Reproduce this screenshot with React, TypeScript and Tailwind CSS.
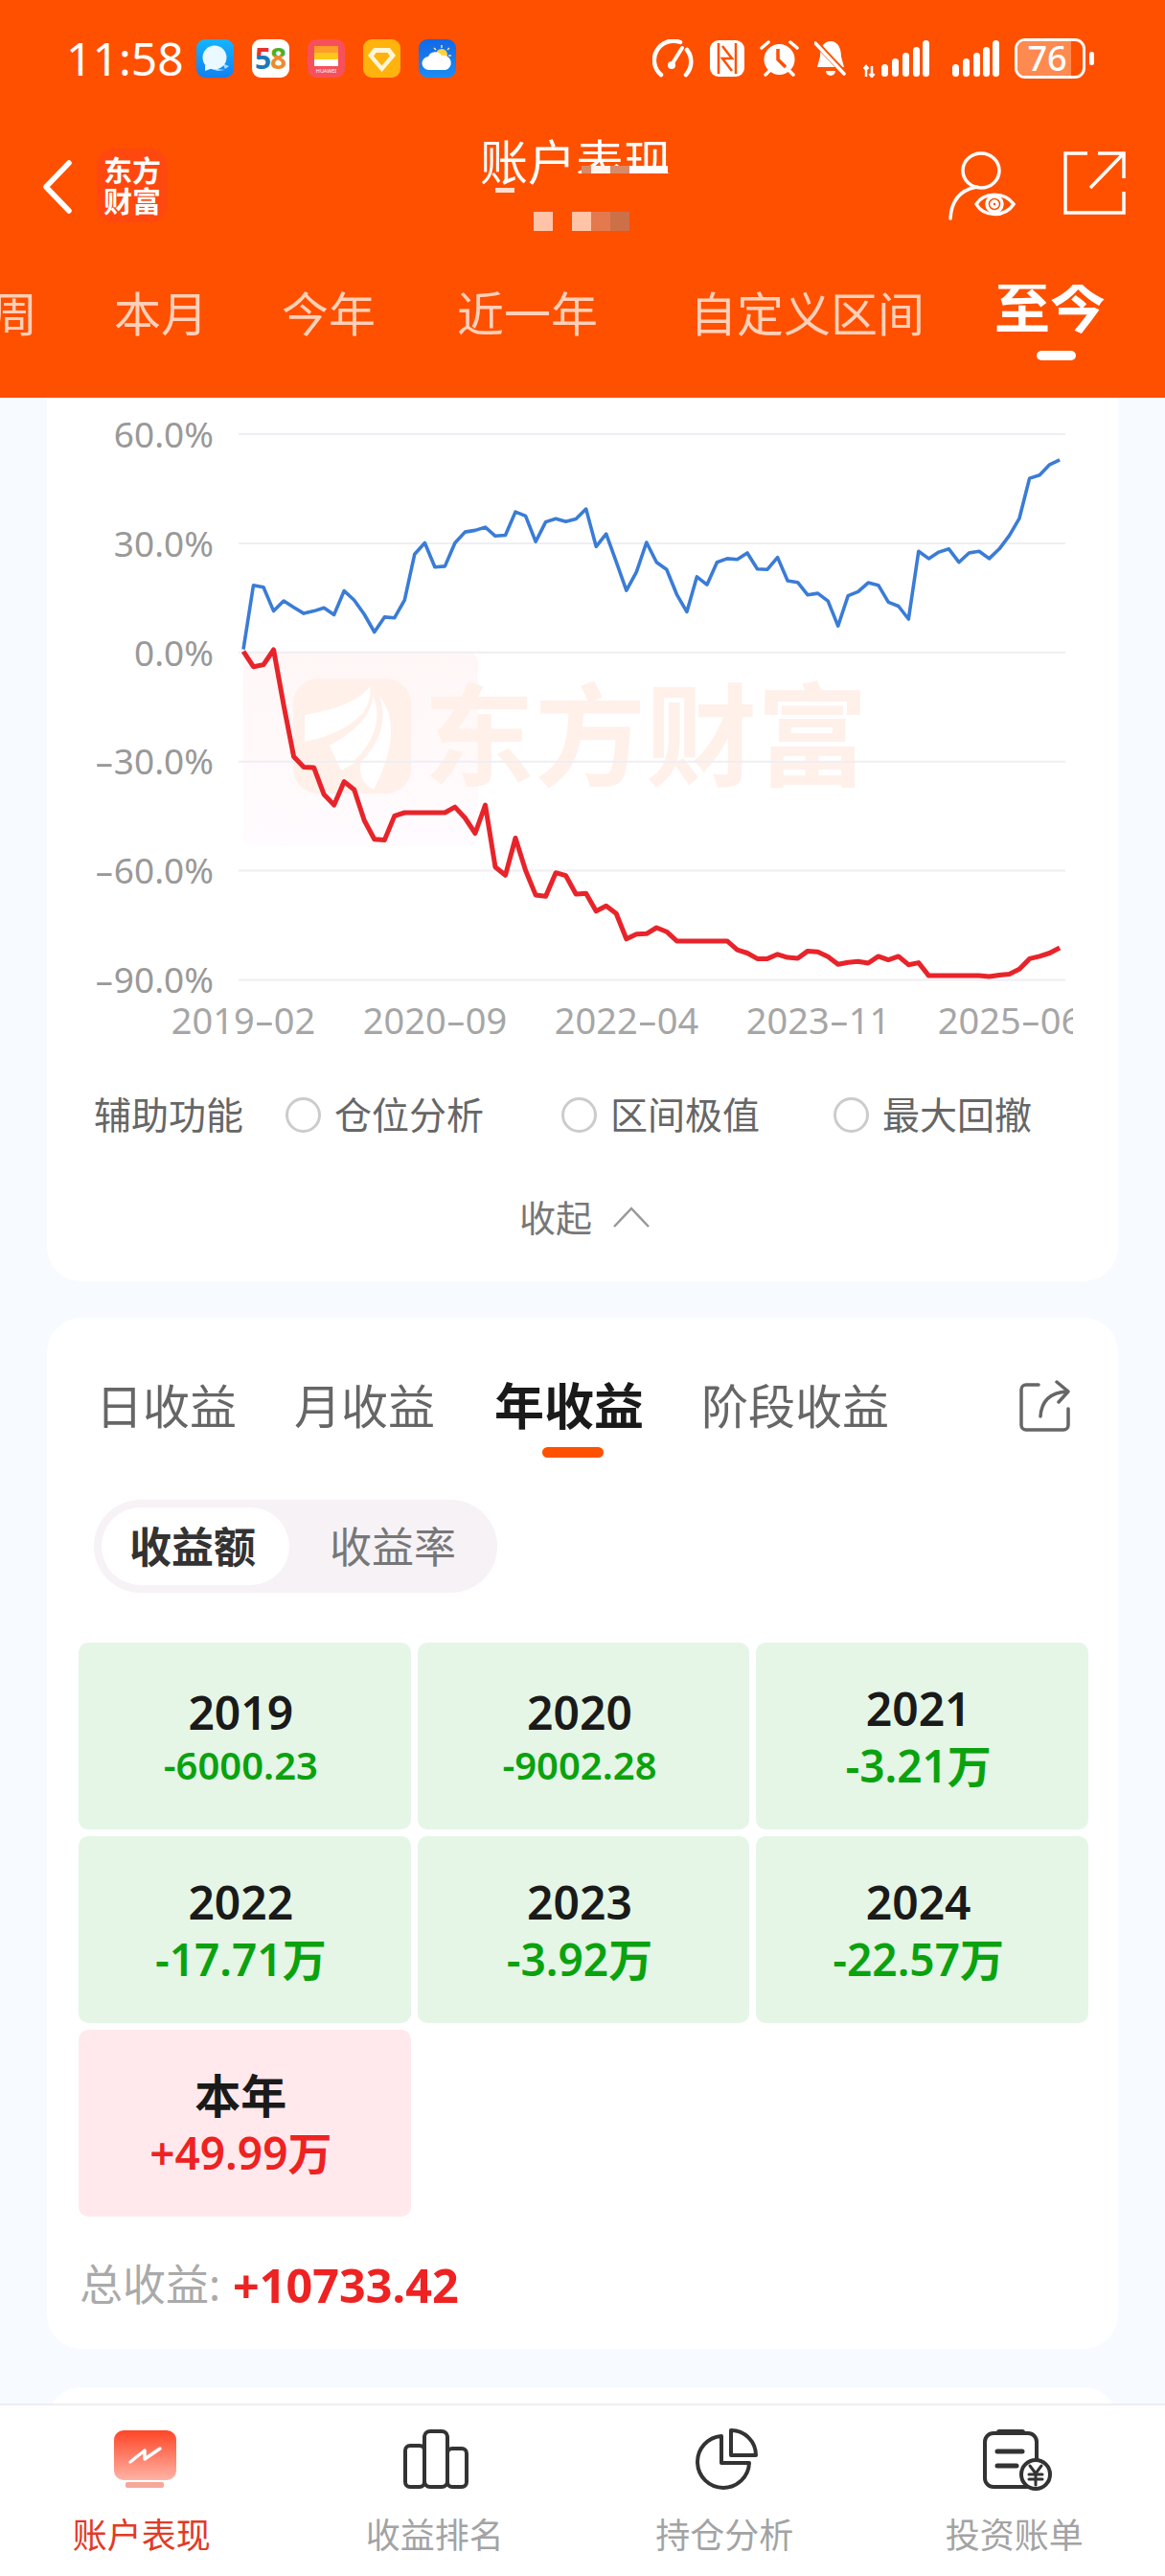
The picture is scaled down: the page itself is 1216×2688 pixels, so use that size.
import React from "react";

const FONT = '"Noto Sans", "Noto Sans CJK SC", sans-serif';
const blueY = [612,453,458,517,492,508,523,517,509,526,467,490,525,569,532,534,490,376,348,408,406,348,321,317,309,331,329,271,281,345,296,288,295,289,264,357,326,395,466,420,347,396,414,476,519,432,452,396,387,389,373,413,414,384,442,446,477,473,492,554,479,469,447,453,495,505,537,369,387,371,363,396,373,369,387,363,330,287,188,180,154,142];
const redY = [617,655,650,613,750,878,904,905,972,998,940,960,1036,1083,1085,1025,1017,1017,1017,1017,1017,1003,1030,1068,998,1152,1172,1080,1160,1221,1224,1166,1173,1219,1217,1261,1248,1267,1330,1318,1317,1302,1312,1335,1335,1335,1335,1335,1335,1357,1365,1379,1379,1368,1376,1378,1360,1362,1374,1393,1388,1386,1390,1373,1382,1373,1394,1389,1421,1421,1421,1421,1421,1421,1423,1420,1417,1405,1379,1373,1365,1352];
const toPts = (ys: number[]) => ys.map((y, i) => `${(5 + i * 10.52).toFixed(1)},${(y / 2.376 - 13).toFixed(1)}`).join(" ");

const Dash = () => <span className="inline-block w-[20px] text-center scale-x-[1.7]">-</span>;

const AppIcons = () => (
  <div className="flex gap-[19px] ml-[13px]">
    <svg width="39" height="40" viewBox="0 0 39 40">
      <defs><linearGradient id="m" x1="0" y1="0" x2="0" y2="1"><stop offset="0" stopColor="#12b5ff" /><stop offset="1" stopColor="#1280f0" /></linearGradient></defs>
      <rect width="39" height="40" rx="9" fill="url(#m)" />
      <path d="M27 25 L34 28 L30 31 Z M14 30 L30 32 L22 33 Z" fill="#9fdcff" />
      <ellipse cx="19" cy="19" rx="12.5" ry="12.5" fill="#eaf8ff" />
      <path d="M9 27 L9 33 L17 30 Z" fill="#eaf8ff" />
    </svg>
    <svg width="39" height="40" viewBox="0 0 39 40">
      <defs>
        <linearGradient id="f" x1="0" y1="0" x2="0" y2="1"><stop offset="0.45" stopColor="#e5342c" /><stop offset="0.45" stopColor="#1c79b8" /></linearGradient>
        <linearGradient id="e" x1="0" y1="0" x2="0" y2="1"><stop offset="0.45" stopColor="#4fae24" /><stop offset="0.45" stopColor="#ee8a2b" /></linearGradient>
      </defs>
      <rect width="39" height="40" rx="9" fill="#fff" />
      <text x="3" y="31" fontSize="30" fontWeight="700" fontFamily="Noto Sans" fill="url(#f)">5</text>
      <text x="19" y="31" fontSize="30" fontWeight="700" fontFamily="Noto Sans" fill="url(#e)">8</text>
    </svg>
    <svg width="39" height="40" viewBox="0 0 39 40">
      <rect width="39" height="40" rx="9" fill="#f7505a" />
      <rect x="7" y="7" width="25" height="7" fill="#ff9d2a" />
      <rect x="7" y="14" width="25" height="7" fill="#ffc61a" />
      <rect x="7" y="21" width="25" height="7" fill="#fff" />
      <text x="19.5" y="35" fontSize="5.5" textAnchor="middle" fill="#fff" fontFamily="Noto Sans">HUAWEI</text>
    </svg>
    <svg width="39" height="40" viewBox="0 0 39 40">
      <rect width="39" height="40" rx="9" fill="#ffb30c" />
      <path d="M11 9 H28 L34 17 L19.5 34 L5 17 Z M13.500 14 L11 17.500 L19.500 27.500 L28 17.500 L25.500 14 Z" fill="#fff6d8" fillRule="evenodd" />
    </svg>
    <svg width="39" height="40" viewBox="0 0 39 40">
      <defs><linearGradient id="w" x1="0" y1="0" x2="0" y2="1"><stop offset="0" stopColor="#1268e6" /><stop offset="1" stopColor="#1b8cf5" /></linearGradient></defs>
      <rect width="39" height="40" rx="9" fill="url(#w)" />
      <circle cx="24" cy="16" r="6" fill="#ffd23f" />
      <path d="M24 6 V9 M32 9 L30 11 M16 9 L18 11 M34 17 H31" stroke="#ffe27a" strokeWidth="1.5" />
      <path d="M11 32 A7 7 0 0 1 10 18 A8 8 0 0 1 24 17 A7.5 7.5 0 0 1 28 32 Z" fill="#fff" />
    </svg>
  </div>
);

const StatusRight = () => (
  <div className="ml-auto mr-[74px] flex items-center text-white">
    <svg width="44" height="40" viewBox="0 0 44 40" fill="none" stroke="#fff" strokeLinecap="round" className="shrink-0">
      <path d="M9 37 A20 20 0 0 1 29 3" strokeWidth="4.500" />
      <path d="M36 11 A20 20 0 0 1 35 37" strokeWidth="4.500" />
      <path d="M21 25 L31 9" strokeWidth="4" />
      <circle cx="20" cy="27" r="4" fill="#fff" stroke="none" />
    </svg>
    <svg width="36" height="38" viewBox="0 0 36 38" className="ml-[16px] shrink-0">
      <rect width="36" height="38" rx="9" fill="#fff" />
      <path d="M9 3 V35 M27 3 V35" stroke="#ff5000" strokeWidth="2.500" />
      <path d="M13 6 L23 19 L13 19 L23 32" fill="none" stroke="#ff5000" strokeWidth="2.500" />
    </svg>
    <svg width="41" height="40" viewBox="0 0 41 40" className="ml-[16px] shrink-0">
      <circle cx="20.5" cy="21" r="16" fill="#fff" />
      <path d="M19 10 V21 L27 29" stroke="#ff5000" strokeWidth="3.500" fill="none" />
      <path d="M2 9 L9 3 M39 9 L32 3 M6 37 L10 33 M35 37 L31 33" stroke="#fff" strokeWidth="3.500" strokeLinecap="round" />
    </svg>
    <svg width="34" height="40" viewBox="0 0 34 40" className="ml-[16px] shrink-0">
      <path d="M17 2 C25 2 28 10 28 18 L31 29 H3 L6 18 C6 10 9 2 17 2 Z" fill="#fff" />
      <path d="M12 33 A5 5 0 0 0 22 33 Z" fill="#fff" />
      <path d="M2 4 L32 36" stroke="#ff5000" strokeWidth="6" />
      <path d="M1 4 L31 36" stroke="#fff" strokeWidth="3.500" strokeLinecap="round" />
    </svg>
    <svg width="69" height="40" viewBox="0 0 69 40" className="ml-[17px] shrink-0" fill="#fff">
      <path d="M3 28 V39 M9 28 V39 M6.500 36 L9 39 L11.500 36 M0.500 31 L3 28 L5.500 31" stroke="#fff" strokeWidth="2.500" fill="none" />
      <rect x="19" y="26" width="7" height="13" rx="3.500" />
      <rect x="30" y="20" width="7" height="19" rx="3.500" />
      <rect x="41" y="14" width="7" height="25" rx="3.500" />
      <rect x="52" y="8" width="7" height="31" rx="3.500" />
      <rect x="62" y="1" width="7" height="38" rx="3.500" />
    </svg>
    <svg width="49" height="40" viewBox="0 0 49 40" className="ml-[24px] shrink-0" fill="#fff">
      <rect x="0" y="26" width="7" height="13" rx="3.500" />
      <rect x="11" y="20" width="7" height="19" rx="3.500" />
      <rect x="22" y="14" width="7" height="25" rx="3.500" />
      <rect x="32" y="8" width="7" height="31" rx="3.500" />
      <rect x="42" y="1" width="7" height="38" rx="3.500" />
    </svg>
    <div className="ml-[16px] relative w-[74px] h-[42px] rounded-[11px] border-[3px] border-white overflow-hidden shrink-0">
      <div className="absolute left-0 top-0 bottom-0 w-[56px] bg-[#ff8a50]" />
      <div className="absolute inset-0 flex items-center justify-center text-[36px] leading-none font-medium pr-[6px]">76</div>
    </div>
    <div className="ml-[4px] w-[5px] h-[14px] rounded-full bg-white shrink-0" />
  </div>
);

const Chart = () => (
  <div className="flex pt-[18px]">
    <div className="w-[174px] h-[609px] flex flex-col justify-between items-end text-[37px] leading-[40px] text-[#999999]">
      <div>60.0%</div>
      <div>30.0%</div>
      <div>0.0%</div>
      <div><Dash />30.0%</div>
      <div><Dash />60.0%</div>
      <div><Dash />90.0%</div>
    </div>
    <div className="relative ml-[26px] w-[863px] h-[609px]">
      <div className="absolute left-[5px] top-[247px] w-[245px] h-[203px] rounded-[12px] bg-linear-to-b from-[#fff7f6] to-[#fffbfe]" />
      <div className="absolute left-[57px] top-[275px] w-[123px] h-[120px] rounded-[26px] bg-[#fff0ea] overflow-hidden">
        <svg width="123" height="120" viewBox="0 0 123 120">
          <path d="M12 38 C50 32 72 20 80 8 C84 34 60 56 12 66 Z" fill="#fff" />
          <path d="M38 70 C62 56 84 40 84 12 C104 30 112 62 84 116 C70 108 68 96 72 84 L50 96 Z" fill="#fff" />
          <path d="M84 12 C98 40 88 66 66 88" fill="none" stroke="#fff0ea" strokeWidth="6" />
        </svg>
      </div>
      <div className="absolute left-[193px] top-[268px] text-[116px] leading-[130px] font-bold text-[#fff0ea] whitespace-nowrap">东方财富</div>
      <svg width="863" height="609" viewBox="0 0 863 609" className="absolute inset-0">
        {[20, 133.9, 247.8, 361.7, 475.6, 589.5].map((y) => (
          <line key={y} x1="0" x2="863" y1={y} y2={y} stroke="#eeeef3" strokeWidth="2" />
        ))}
        <polyline points={toPts(blueY)} fill="none" stroke="#3a7cd6" strokeWidth="3.600" strokeLinejoin="round" />
        <polyline points={toPts(redY)} fill="none" stroke="#e8242a" strokeWidth="5" strokeLinejoin="round" />
      </svg>
    </div>
  </div>
);

const Radio = ({ label, cls }: { label: string; cls: string }) => (
  <>
    <div className={`w-[37px] h-[37px] rounded-full border-[3px] border-[#cccccc] shrink-0 ${cls}`} />
    <span className="ml-[14px] whitespace-nowrap">{label}</span>
  </>
);

const years = [
  ["2019", "-6000.23", "text-[40px] leading-[50px]"],
  ["2020", "-9002.28", "text-[40px] leading-[50px]"],
  ["2021", "-3.21万", "text-[46px] leading-[58px]"],
  ["2022", "-17.71万", "text-[46px] leading-[58px]"],
  ["2023", "-3.92万", "text-[46px] leading-[58px]"],
  ["2024", "-22.57万", "text-[46px] leading-[58px]"],
];

const Cell = ({ y, v, size, pink }: { y: string; v: string; size: string; pink?: boolean }) => (
  <div className={`h-[195px] rounded-[10px] flex flex-col items-center justify-center pr-[8px] ${pink ? "bg-[#ffe9ec]" : "bg-[#e5f6e6]"}`}>
    <div className="text-[48px] leading-[60px] font-semibold text-[#1a1a1a]">{y}</div>
    <div className={`${size} font-semibold ${pink ? "text-[#ee2222]" : "text-[#0aa20f]"}`}>{v}</div>
  </div>
);

const bottomTabs = [
  {
    label: "账户表现",
    color: "text-[#e23a26] mr-[7px]",
    iconCls: "ml-[1px]",
    icon: (
      <svg width="66" height="66" viewBox="0 0 66 66">
        <defs><linearGradient id="b" x1="0" y1="0" x2="0" y2="1"><stop offset="0" stopColor="#ff4526" /><stop offset="1" stopColor="#ffb3a6" /></linearGradient></defs>
        <rect x="0" y="3" width="65" height="52" rx="10" fill="url(#b)" />
        <rect x="12" y="57" width="40" height="6" rx="2" fill="#f7a79a" />
        <path d="M17 36 L32 24 L32 33 L48 22" fill="none" stroke="#fff" strokeWidth="3.500" strokeLinecap="round" strokeLinejoin="round" />
      </svg>
    ),
  },
  {
    label: "收益排名",
    color: "text-[#a3a3a3]",
    iconCls: "ml-[2px]",
    icon: (
      <svg width="68" height="66" viewBox="0 0 68 66" fill="none" stroke="#333333" strokeWidth="4">
        <rect x="2" y="19" width="20" height="43" rx="5" />
        <rect x="22" y="4" width="24" height="58" rx="6" />
        <rect x="46" y="22" width="20" height="40" rx="5" />
      </svg>
    ),
  },
  {
    label: "持仓分析",
    color: "text-[#a3a3a3]",
    iconCls: "ml-[6px]",
    icon: (
      <svg width="66" height="66" viewBox="0 0 66 66" fill="none" stroke="#333333" strokeWidth="4" strokeLinejoin="round">
        <path d="M27 9 A27 27 0 1 0 56 37 H27 Z" />
        <path d="M37 3 A26 26 0 0 1 63 29 H37 Z" />
      </svg>
    ),
  },
  {
    label: "投资账单",
    color: "text-[#a3a3a3]",
    iconCls: "ml-[7px]",
    icon: (
      <svg width="74" height="66" viewBox="0 0 74 66" fill="none" stroke="#333333" strokeWidth="4" strokeLinecap="round">
        <path d="M50 62 H12 A9 9 0 0 1 3 53 V15 A9 9 0 0 1 12 6 H48 A9 9 0 0 1 57 15 V32" />
        <path d="M18 5 H42" strokeWidth="6" />
        <path d="M16 25 H42 M16 40 H36" strokeWidth="5" />
        <circle cx="56" cy="49" r="15" fill="#fff" />
        <path d="M50 40 L56 48 L62 40 M49 49 H63 M49 54 H63 M56 48 V60" strokeWidth="3" />
      </svg>
    ),
  },
];

export default function App() {
  return (
    <div className="relative w-[1216px] h-[2688px] overflow-hidden flex flex-col bg-[#f7faff]" style={{ fontFamily: FONT }}>
      <header className="h-[415px] shrink-0 bg-[#ff5000] flex flex-col text-white">
        <div className="flex items-center h-[40px] mt-[41px] pl-[69px]">
          <span className="text-[48px] leading-[40px]">11:58</span>
          <AppIcons />
          <div className="flex-1" />
          <StatusRight />
        </div>
        <div className="flex items-start h-[96px] mt-[64px]">
          <svg width="30" height="56" viewBox="0 0 30 56" fill="none" stroke="#fff" strokeWidth="5.500" strokeLinecap="round" strokeLinejoin="round" className="ml-[45px] mt-[22px] shrink-0">
            <path d="M27 3 L3 28 L27 53" />
          </svg>
          <div className="ml-[26px] mt-[10px] w-[74px] h-[77px] rounded-[18px] bg-[#ff4810] flex flex-col items-center justify-center text-white text-[30px] leading-[32px] font-bold shrink-0">
            <div>东方</div>
            <div>财富</div>
          </div>
          <div className="relative ml-[326px] w-[199px] h-[96px] shrink-0">
            <div className="text-[50px] leading-[48px] whitespace-nowrap">账户表现</div>
            <div className="absolute left-[68px] top-[36px] w-[140px] h-[18px] bg-[#ff5000]" />
            <div className="absolute left-[106px] top-[28px] w-[50px] h-[8px] bg-[#d98a68]" />
            <div className="absolute left-[116px] top-[28px] w-[20px] h-[8px] bg-[#fff4ea]" />
            <div className="absolute left-[156px] top-[28px] w-[40px] h-[8px] bg-white" />
            <div className="absolute left-[16px] top-[51px] w-[20px] h-[5px] bg-[#ffe0cf]" />
            <div className="absolute left-[56px] top-[76px] w-[20px] h-[20px] bg-[#ffc4a8]" />
            <div className="absolute left-[96px] top-[76px] w-[20px] h-[20px] bg-[#ffc4a8]" />
            <div className="absolute left-[116px] top-[76px] w-[20px] h-[20px] bg-[#e4794d]" />
            <div className="absolute left-[136px] top-[76px] w-[20px] h-[20px] bg-[#cc7048]" />
          </div>
          <div className="ml-auto mr-[41px] mt-[13px] flex items-start shrink-0">
            <svg width="70" height="72" viewBox="0 0 70 72" fill="none" stroke="#fff" strokeWidth="3.500" strokeLinecap="round">
              <ellipse cx="34" cy="20" rx="19" ry="18" />
              <path d="M2 70 C3 52 12 40 30 37" />
              <path d="M29 55 C37 42 59 42 68 55 C59 69 37 69 29 55 Z" />
              <circle cx="48" cy="55" r="8" />
              <circle cx="48" cy="55" r="3" />
            </svg>
            <svg width="65" height="66" viewBox="0 0 65 66" fill="none" stroke="#fff" strokeWidth="3.500" className="ml-[50px]">
              <path d="M25 2 H2 V64 H63 V42" />
              <path d="M28 38 L63 2 M36 2 H63 V28" />
            </svg>
          </div>
        </div>
        <div className="relative flex items-center h-[60px] mt-[56px] overflow-hidden text-[49px] leading-[60px] text-[#ffd0b8] whitespace-nowrap">
          <span className="ml-[-59px] shrink-0">本周</span>
          <span className="ml-[80px] shrink-0">本月</span>
          <span className="ml-[77px] shrink-0">今年</span>
          <span className="ml-[85px] shrink-0">近一年</span>
          <span className="ml-[96px] shrink-0">自定义区间</span>
          <span className="ml-[73px] shrink-0 text-[58px] font-bold text-white mt-[-14px]">至今</span>
        </div>
        <div className="flex justify-end pr-[93px] mt-[9px]">
          <div className="w-[41px] h-[10px] rounded-full bg-white" />
        </div>
      </header>

      <main className="flex-1 min-h-0 overflow-hidden px-[49px]">
        <section className="bg-white rounded-b-[36px] pb-[42px]">
          <Chart />
          <div className="h-[44px] w-[966px] ml-[105px] flex overflow-hidden text-[38px] leading-[44px] text-[#a6a6a6]">
            <div className="w-[200px] shrink-0 text-center whitespace-nowrap">2019<Dash />02</div>
            <div className="w-[200px] shrink-0 text-center whitespace-nowrap">2020<Dash />09</div>
            <div className="w-[200px] shrink-0 text-center whitespace-nowrap">2022<Dash />04</div>
            <div className="w-[200px] shrink-0 text-center whitespace-nowrap">2023<Dash />11</div>
            <div className="w-[200px] shrink-0 text-center whitespace-nowrap">2025<Dash />06</div>
          </div>
          <div className="flex items-center h-[50px] mt-[52px] pl-[49px] text-[39px] leading-[50px] text-[#666666]">
            <span className="whitespace-nowrap">辅助功能</span>
            <Radio label="仓位分析" cls="ml-[44px]" />
            <Radio label="区间极值" cls="ml-[81px]" />
            <Radio label="最大回撤" cls="ml-[77px]" />
          </div>
          <div className="flex items-center justify-center h-[50px] mt-[57px] text-[38px] text-[#777777] pl-[4px]">
            <span>收起</span>
            <svg width="38" height="22" viewBox="0 0 38 22" fill="none" stroke="#999999" strokeWidth="2.500" className="ml-[22px]">
              <path d="M1 21 L19 2 L37 21" />
            </svg>
          </div>
        </section>

        <section className="bg-white rounded-[36px] mt-[38px] pt-[62px] pb-[37px]">
          <div className="flex items-center h-[60px] pl-[51px] text-[49px] leading-[60px] text-[#666666] whitespace-nowrap">
            <span>日收益</span>
            <span className="ml-[60px]">月收益</span>
            <span className="relative ml-[62px] text-[52px] font-bold text-[#1a1a1a]">
              年收益
              <span className="absolute left-[50px] top-[73px] w-[64px] h-[11px] rounded-full bg-[#ff5000]" />
            </span>
            <span className="ml-[60px]">阶段收益</span>
            <svg width="54" height="54" viewBox="0 0 54 54" fill="none" stroke="#666666" strokeWidth="3.500" strokeLinecap="round" strokeLinejoin="round" className="ml-auto mr-[49px]">
              <path d="M20 5 H7 A5 5 0 0 0 2 10 V47 A5 5 0 0 0 7 52 H46 A5 5 0 0 0 51 47 V30" />
              <path d="M22 38 C23 22 32 13 50 12 M39 2 L51 12 L41 23" />
            </svg>
          </div>
          <div className="flex items-center mt-[68px] ml-[49px] w-[421px] h-[97px] p-[8px] rounded-full bg-[#f6f2f6]">
            <div className="w-[196px] h-[81px] rounded-full bg-white flex items-center justify-center text-[44px] font-bold text-[#333333] pr-[6px]">收益额</div>
            <div className="ml-[42px] text-[44px] text-[#777777]">收益率</div>
          </div>
          <div className="grid grid-cols-3 gap-[7px] w-[1054px] ml-[33px] mt-[52px]">
            {years.map(([y, v, s]) => <Cell key={y} y={y} v={v} size={s} />)}
            <Cell y="本年" v="+49.99万" size="text-[46px] leading-[58px]" pink />
          </div>
          <div className="flex items-center h-[60px] mt-[41px] pl-[34px] whitespace-nowrap">
            <span className="text-[45px] text-[#aaaaaa]">总收益:</span>
            <span className="ml-[13px] text-[48.500px] font-bold text-[#ee2222]">+10733.42</span>
          </div>
        </section>

        <section className="bg-white rounded-t-[36px] mt-[40px] h-[200px]" />
      </main>

      <nav className="h-[180px] shrink-0 bg-white border-t-2 border-[#eeeeee] flex pr-[6px]">
        {bottomTabs.map((t) => (
          <div key={t.label} className="flex-1 flex flex-col items-center pt-[23px]">
            <div className={`h-[66px] flex items-center ${t.iconCls}`}>{t.icon}</div>
            <div className={`mt-[22px] text-[36px] leading-[50px] ${t.color}`}>{t.label}</div>
          </div>
        ))}
      </nav>
    </div>
  );
}
